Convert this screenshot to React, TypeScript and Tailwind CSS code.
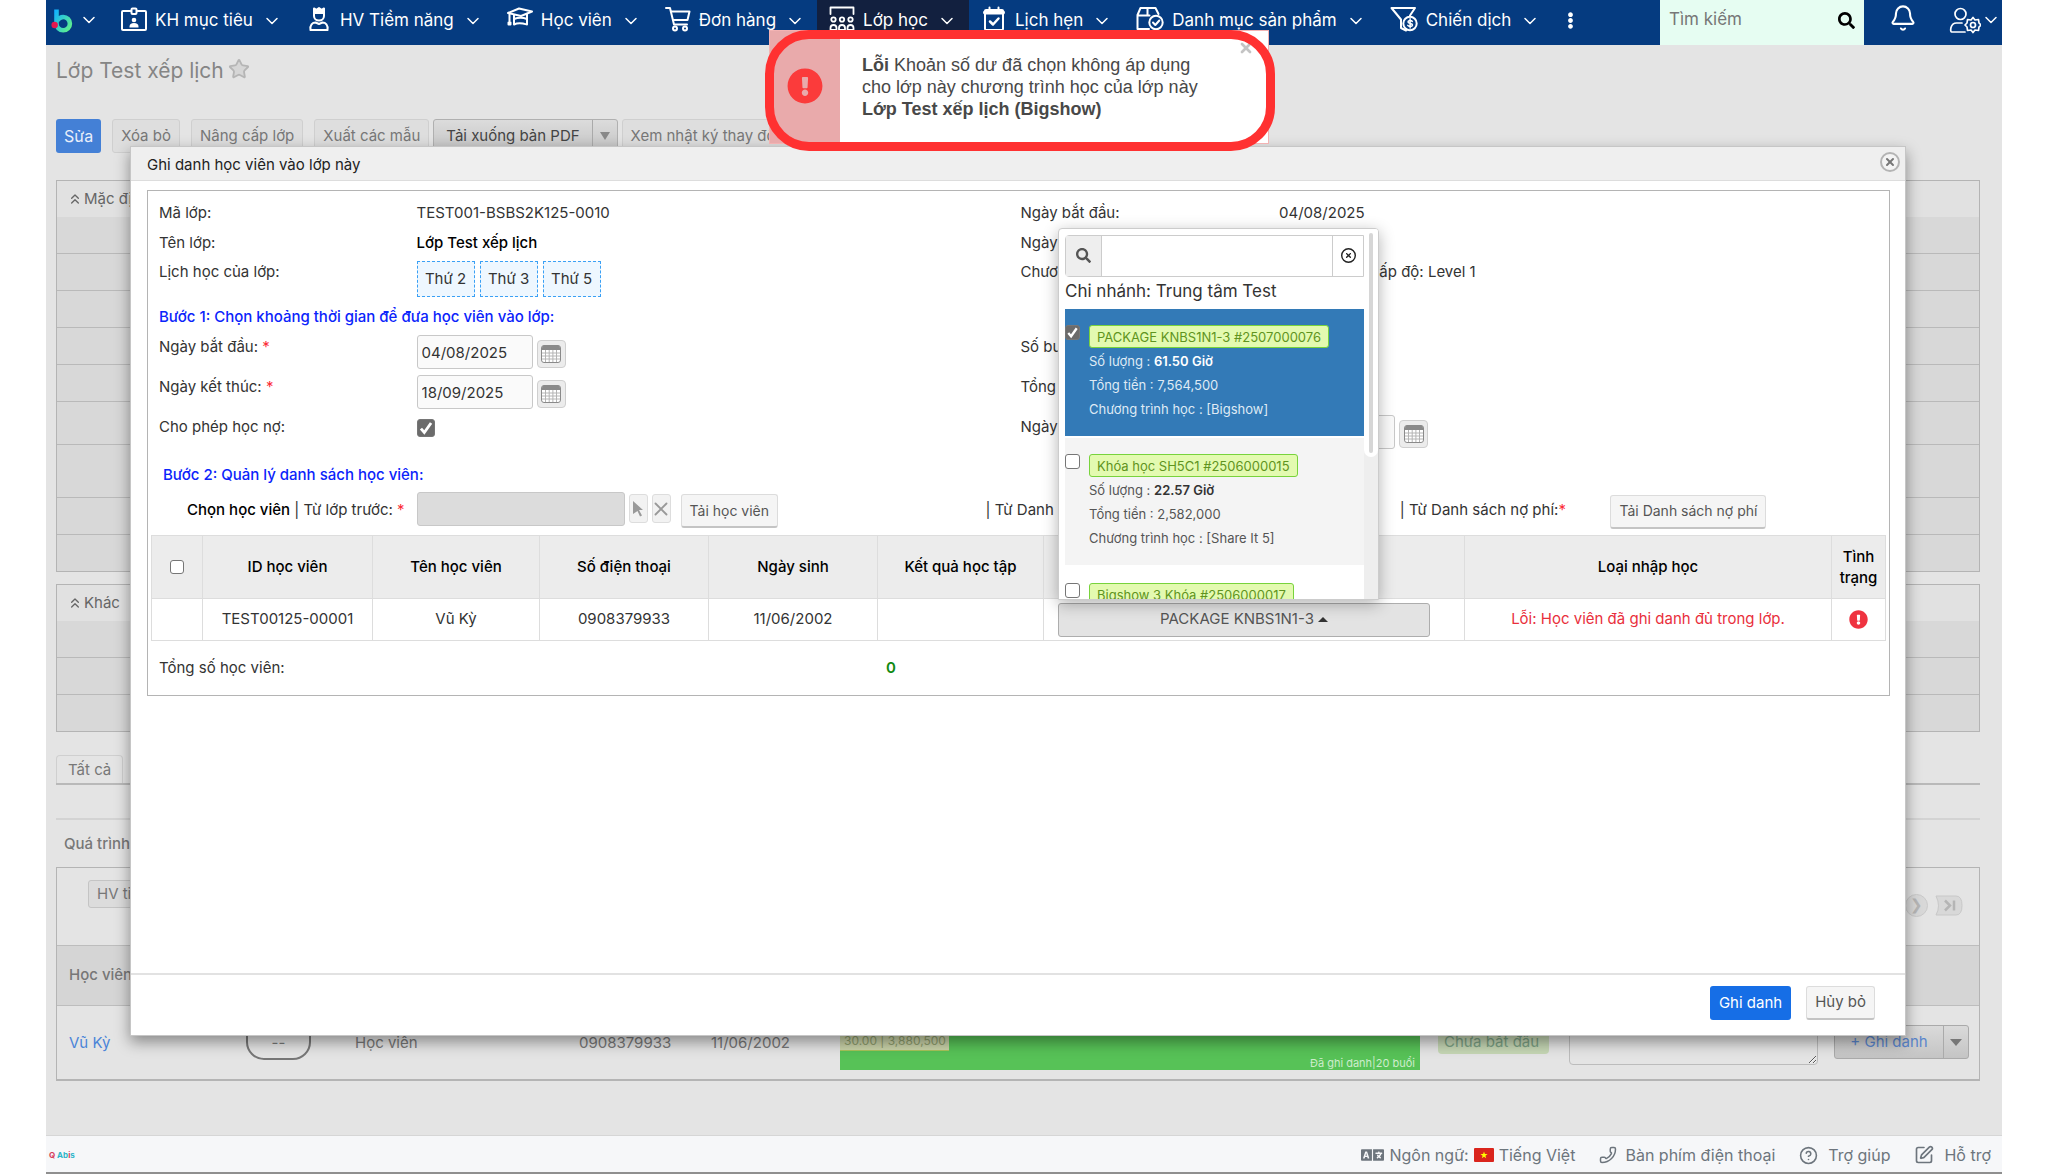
import React, { useState } from "react";
import type { ReactNode } from "react";
import { ChevronDown, ChevronsUp, Bell, CircleHelp, SquarePen, Phone, Star, X } from "lucide-react";
import { FaSearch, FaExclamationCircle, FaEllipsisV, FaLanguage } from "react-icons/fa";
import { FaRegCircleXmark } from "react-icons/fa6";

const navIcon = "h-[26px] w-[26px] shrink-0";
const line = { fill: "none", stroke: "currentColor", strokeWidth: 2, strokeLinecap: "round", strokeLinejoin: "round" } as const;

const BadgeIcon = () => (
  <svg viewBox="0 0 26 26" className={navIcon} {...line}>
    <path d="M9.500 5H2q-1 0-1 1v17q0 1 1 1h22q1 0 1-1V6q0-1-1-1h-7.500" />
    <rect x="10.500" y="2.500" width="5" height="5.500" rx="1" />
    <circle cx="13" cy="14" r="2.300" fill="currentColor" stroke="none" />
    <path d="M8.500 21.500V20.500q0-3.500 4.500-3.500t4.500 3.500v1z" fill="currentColor" stroke="none" />
  </svg>
);
const PersonIcon = () => (
  <svg viewBox="0 0 26 26" className={navIcon} {...line}>
    <path d="M8 7V2.500l2.500 1.300L13 2l2.500 1.800L18 2.500V7z" fill="currentColor" />
    <path d="M8 7v3a5 4.500 0 0 0 10 0V7" />
    <path d="M4.500 24c-.8-5 2-7.500 5-7.500l3.500 1.500 3.500-1.500c3 0 5.800 2.500 5 7.500z" />
  </svg>
);
const CapIcon = () => (
  <svg viewBox="0 0 26 26" className={navIcon} {...line}>
    <path d="M1 7 12 2.500 25 5.500 14 10z" />
    <path d="M7 9v9.500c5-2.500 9.500-1 13 0V8" />
    <path d="M7 13c4-1.500 9-1.500 13 0" />
    <path d="M2.500 7.500v9M1.500 16.500v2h2v-2z" />
  </svg>
);
const CartIcon = () => (
  <svg viewBox="0 0 26 26" className={navIcon} {...line}>
    <path d="M1 2h4l4 16.500h13" />
    <path d="M6 5.500h18.500L22.500 14H8" />
    <circle cx="10" cy="22.500" r="2" />
    <circle cx="20" cy="22.500" r="2" />
  </svg>
);
const ClassIcon = () => (
  <svg viewBox="0 0 26 26" className={navIcon} {...line} strokeWidth={1.8}>
    <path d="M1.500 8V1.500h23V8" />
    {[4.5, 13, 21.5].map((x) => (
      <g key={x}>
        <circle cx={x} cy="13.500" r="2.200" />
        <path d={`M${x - 3} 24v-2a3 3 0 0 1 6 0v2z`} />
      </g>
    ))}
  </svg>
);
const CalendarIcon = () => (
  <svg viewBox="0 0 26 26" className={navIcon} {...line}>
    <rect x="4" y="4" width="18" height="20" rx="1" />
    <path d="M4 6.500h18" strokeWidth="4" />
    <path d="M8.500 1.500v4M17.500 1.500v4" />
    <path d="m9 15.500 3 3 5.500-6" strokeWidth="2.500" />
  </svg>
);
const CatalogIcon = () => (
  <svg viewBox="0 0 28 26" className="h-[26px] w-7 shrink-0" {...line}>
    <path d="M13 23H1.500V9l3-7h15l3 6M1.500 9.500h12M11.500 2v7" />
    <circle cx="20" cy="16.500" r="6.700" />
    <path d="m17 16.500 2.300 2.500 4-4.500" />
  </svg>
);
const FunnelIcon = () => (
  <svg viewBox="0 0 28 26" className="h-[26px] w-7 shrink-0" {...line}>
    <path d="M1.500 2h23.500l-5 7.500M1.500 2 11 13.500V22l5 2.500" />
    <circle cx="20" cy="17.500" r="6.700" />
    <path d="M22.300 15.500c-1-1.500-4.300-1.200-4.300.5 0 2 4.500 1 4.500 3 0 1.800-3.700 2-4.700.4M20.100 12.800v9.200" strokeWidth="1.500" />
  </svg>
);
const UserGearIcon = () => (
  <svg viewBox="0 0 32 28" className="h-7 w-8 shrink-0" {...line} strokeWidth={1.7}>
    <circle cx="11.500" cy="8" r="5.500" />
    <path d="M16 26H2.500c-1.500 0-1.500-9 5-9H13" />
    <circle cx="24" cy="19" r="2.500" />
    <path d="m24 11.500 2 2.500 3.500-.5.500 3.500 2 2-2 2-.5 3.500-3.500-.5-2 2.500-2-2.500-3.500.5-.5-3.500-2-2 2-2 .5-3.500 3.500.5z" />
  </svg>
);

const NavItem = ({ icon, label, active }: { icon: ReactNode; label: string; active?: boolean }) => (
  <button
    type="button"
    className={`flex h-[45px] shrink-0 items-center whitespace-nowrap px-3 pb-1 text-[17px] text-white ${active ? "bg-[#12203f]" : ""}`}
  >
    <span className="pb-1">{icon}</span>
    <span className="ml-2">{label}</span>
    <ChevronDown className="ml-[9px] h-5 w-5" strokeWidth={1.8} />
  </button>
);

const btn = "rounded-[3px] border border-b-2 border-[#dcdcdc] border-b-[#c4c4c4] bg-[#f5f5f5] text-[#555]";
const dimBtn = "h-[34px] shrink-0 whitespace-nowrap rounded-[3px] border border-[#cfcfcf] bg-[#dedede] px-2 text-[#777]";

const CalendarButton = ({ label }: { label: string }) => (
  <button type="button" aria-label={label} className="mt-[5px] flex h-[28px] w-[29px] items-center justify-center rounded border border-[#cfcfcf] bg-[#ececec]">
    <svg viewBox="0 0 20 18" className="h-[18px] w-5">
      <rect x="0.500" y="0.500" width="19" height="17" rx="2.500" fill="#fff" stroke="#8a8a8a" />
      <path d="M1 2.500q0-2 2-2h14q2 0 2 2V5H1z" fill="#8a8a8a" />
      <path d="M1 8h18M1 11h18M1 14h18M4.500 5v12M8.200 5v12M11.900 5v12M15.500 5v12" stroke="#b4b4b4" />
    </svg>
  </button>
);

const TextBox = ({ label, value }: { label: string; value: string }) => {
  const [text, setText] = useState(value);
  return (
    <input
      aria-label={label}
      value={text}
      onChange={(e) => setText(e.target.value)}
      className="h-[34px] w-[116px] rounded-[3px] border border-[#c8c8c8] bg-[#fafafa] px-1 text-[#333]"
    />
  );
};

const Tick = ({ label, checked, className }: { label: string; checked?: boolean; className: string }) => (
  <span className={`relative inline-flex shrink-0 ${className}`}>
    <input
      type="checkbox"
      aria-label={label}
      defaultChecked={checked}
      className="peer h-full w-full appearance-none rounded-[3px] border border-[#767676] bg-white checked:bg-[#6b6b6b]"
    />
    <svg viewBox="0 0 16 16" className="pointer-events-none absolute inset-0 hidden h-full w-full text-white peer-checked:block" fill="none" stroke="currentColor" strokeWidth="2.500">
      <path d="m3.500 8.500 3 3.500 6-8.500" />
    </svg>
  </span>
);

const InfoRow = ({ height, label, required, children, rightLabel, right }: { height: string; label: string; required?: boolean; children: ReactNode; rightLabel?: string; right?: ReactNode }) => (
  <div className={`grid grid-cols-[258fr_605fr_259fr_600fr] leading-[28px] ${height}`}>
    <span>
      {label} {required && <span className="text-red-500">*</span>}
    </span>
    <div className="flex">{children}</div>
    <span className="whitespace-nowrap">{rightLabel}</span>
    <div className="flex whitespace-nowrap">{right}</div>
  </div>
);

type Pack = { name: string; qty: string; total: string; program: string; selected?: boolean };
const packs: Pack[] = [
  { name: "PACKAGE KNBS1N1-3 #2507000076", qty: "61.50 Giờ", total: "7,564,500", program: "[Bigshow]", selected: true },
  { name: "Khóa học SH5C1 #2506000015", qty: "22.57 Giờ", total: "2,582,000", program: "[Share It 5]" },
  { name: "Bigshow 3 Khóa #2506000017", qty: "30.00 Giờ", total: "3,880,500", program: "[Bigshow]" },
];

const PackMenu = () => (
  <div className="absolute bottom-[37px] left-0 z-10 flex h-[372px] w-[321px] overflow-hidden rounded-t border border-[#ccc] bg-white text-left shadow-[0_4px_16px_rgba(0,0,0,0.3)]">
    <div className="w-[305px] shrink-0 pl-[6px] pt-[6px]">
      <div className="flex h-[42px] rounded-l border border-[#ccc]">
        <span className="flex w-9 shrink-0 items-center justify-center border-r border-[#ccc] bg-[#eee]">
          <FaSearch className="h-[15px] w-[15px] text-[#555]" />
        </span>
        <input aria-label="Tìm gói" className="min-w-0 flex-1 px-2 outline-none" />
        <button type="button" aria-label="Xóa tìm kiếm" className="flex w-[31px] shrink-0 items-center justify-center border-l border-[#ccc]">
          <FaRegCircleXmark className="h-[15px] w-[15px] text-[#222]" />
        </button>
      </div>
      <p className="h-8 text-[17px] leading-[28px] text-[#333]">Chi nhánh: Trung tâm Test</p>
      <div className="flex flex-col gap-[2px]">
        {packs.map((p, i) => (
          <div key={p.name} className={`flex h-[127px] shrink-0 pt-4 text-[13px] leading-[24px] ${p.selected ? "bg-[#337ab7] text-[#dfeaf5]" : i === 1 ? "bg-[#f4f4f4] text-[#555]" : "bg-white text-[#555]"}`}>
            <Tick label={p.name} checked={p.selected} className="h-[15px] w-[15px]" />
            <div className="ml-[9px] whitespace-nowrap">
              <span className="inline-block h-[23px] rounded-[3px] border border-[#78d33c] bg-[#e3fab0] px-[7px] leading-[22px] text-[#5f9420]">{p.name}</span>
              <p>
                Số lượng : <b className={`font-semibold ${p.selected ? "text-white" : "text-[#333]"}`}>{p.qty}</b>
              </p>
              <p>Tổng tiền : {p.total}</p>
              <p>Chương trình học : {p.program}</p>
            </div>
          </div>
        ))}
      </div>
    </div>
    <div className="flex-1 bg-[#eee]">
      <div className="h-[228px] rounded-b-full bg-white px-[5px] py-1">
        <div className="h-full rounded-full bg-[#d6d6d6]" />
      </div>
    </div>
  </div>
);

const DimPanel = ({ title, rows }: { title: string; rows: string[] }) => (
  <section className="border border-[#b4b4b4] bg-[#d8d8d8]">
    <h2 className="flex h-[36px] items-center gap-px bg-[#e1e1e1] pl-[10px] text-[#666]">
      <ChevronsUp className="h-4 w-4" />
      {title}
    </h2>
    {rows.map((h, i) => (
      <div key={i} className={`${h} ${i > 0 ? "border-t border-[#b9b9b9]" : ""}`} />
    ))}
  </section>
);

const Header = () => (
  <header className="flex h-[45px] shrink-0 items-start bg-[#053b80] text-white">
    <button type="button" aria-label="Trang chủ" className="mr-[10px] flex h-[39px] items-center gap-[6px] pl-[5px]">
      <svg viewBox="0 0 24 28" className="h-[27px] w-[22px]">
        <defs>
          <linearGradient id="logo" x1="0" y1="0" x2="1" y2="1">
            <stop offset="0" stopColor="#12b4ff" />
            <stop offset="1" stopColor="#60f08a" />
          </linearGradient>
        </defs>
        <path d="M6 3v15.500a7.300 7.300 0 1 0 7.300-7.300q-4 0-6.500 4" fill="none" stroke="url(#logo)" strokeWidth="5" />
        <circle cx="4" cy="20" r="3.500" fill="#e6174f" />
      </svg>
      <ChevronDown className="h-5 w-5" strokeWidth={1.8} />
    </button>
    <nav className="flex">
      <NavItem icon={<BadgeIcon />} label="KH mục tiêu" />
      <NavItem icon={<PersonIcon />} label="HV Tiềm năng" />
      <NavItem icon={<CapIcon />} label="Học viên" />
      <NavItem icon={<CartIcon />} label="Đơn hàng" />
      <NavItem icon={<ClassIcon />} label="Lớp học" active />
      <NavItem icon={<CalendarIcon />} label="Lịch hẹn" />
      <NavItem icon={<CatalogIcon />} label="Danh mục sản phẩm" />
      <NavItem icon={<FunnelIcon />} label="Chiến dịch" />
      <button type="button" aria-label="Thêm" className="flex h-[41px] items-center px-[10px]">
        <FaEllipsisV className="h-[17px] w-[17px]" />
      </button>
    </nav>
    <div className="ml-auto flex h-[45px] w-[204px] shrink-0 items-center bg-[#e6fdf2] px-[9px] pb-[5px]">
      <input aria-label="Tìm kiếm" placeholder="Tìm kiếm" className="min-w-0 flex-1 text-[17px] outline-none placeholder:text-[#777]" />
      <FaSearch className="h-[17px] w-[17px] text-black" />
    </div>
    <button type="button" aria-label="Thông báo" className="ml-[25px] mt-1">
      <Bell className="h-7 w-7" strokeWidth={1.8} />
    </button>
    <button type="button" aria-label="Tài khoản" className="ml-[32px] mr-px mt-1.5 flex items-center">
      <UserGearIcon />
      <ChevronDown className="h-5 w-5" strokeWidth={1.8} />
    </button>
  </header>
);

const Backdrop = () => (
  <main className="flex-1 pl-[10px] pr-[22px] text-[15px] text-[#777]">
    <h1 className="flex h-[52px] items-center gap-1 text-[21px] text-[#858585]">
      Lớp Test xếp lịch <Star className="mb-1 h-[22px] w-[22px] fill-[#d6d6d6] text-[#b5b5b5]" />
    </h1>
    <div className="mt-[22px] flex gap-[11px]">
      <button type="button" className="h-[34px] shrink-0 rounded-[3px] bg-[#4480d6] px-2 text-base text-[#e8eefa]">Sửa</button>
      <button type="button" className={dimBtn}>Xóa bỏ</button>
      <button type="button" className={dimBtn}>Nâng cấp lớp</button>
      <button type="button" className={dimBtn}>Xuất các mẫu</button>
      <div className="-ml-[7px] flex h-[34px] shrink-0 rounded-[3px] border border-[#b0b0b0] bg-gradient-to-b from-[#dcdcdc] to-[#c4c4c4] text-[#444]">
        <button type="button" className="px-3">Tải xuống bản PDF</button>
        <button type="button" aria-label="Thêm lựa chọn" className="flex items-center border-l border-[#aaa] px-[7px]">
          <span className="border-x-[5px] border-t-[8px] border-x-transparent border-t-[#888]" />
        </button>
      </div>
      <button type="button" className={`-ml-[7px] ${dimBtn}`}>Xem nhật ký thay đổi</button>
    </div>
    <div className="mt-[27px] flex flex-col gap-3">
      <DimPanel title="Mặc định" rows={["h-9", "h-[37px]", "h-[37px]", "h-[37px]", "h-[37px]", "h-[43px]", "h-[53px]", "h-[37px]", "h-[37px]"]} />
      <DimPanel title="Khác" rows={["h-9", "h-[37px]", "h-[37px]"]} />
    </div>
    <div className="mt-[23px] border-b-2 border-[#b9b9b9]">
      <button type="button" className="h-[28px] rounded-t border border-b-0 border-[#cfcfcf] px-[11px] pt-0.5">Tất cả</button>
    </div>
    <h2 className="mt-[33px] h-[49px] border-t-2 border-[#d3d3d3] pl-2 pt-[13px] font-medium">Quá trình học tập</h2>
    <section className="border border-b-2 border-[#b4b4b4]">
      <div className="flex h-[77px] items-start justify-between pl-[31px] pr-4 pt-3">
        <button type="button" className="h-[28px] rounded-[3px] border border-[#c4c4c4] bg-[#dcdcdc] px-2">HV tiềm năng</button>
        <div className="mt-[14px] flex gap-[7px] text-[#b5b5b5]">
          <span className="flex h-[23px] w-[23px] items-center justify-center rounded-full border border-[#cacaca] bg-[#d8d8d8]">❯</span>
          <svg viewBox="0 0 28 20" className="h-[23px] w-[28px]" fill="#d8d8d8" stroke="#c8c8c8">
            <path d="M1 .500h20q6 0 6 9.500t-6 9.500H1q5-9 0-19z" />
            <path d="m10 5 5 5-5 5m9-10v10" fill="none" stroke="#b5b5b5" strokeWidth="2.500" />
          </svg>
        </div>
      </div>
      <div className="flex h-[61px] items-center border-y border-[#bdbdbd] bg-[#d5d5d5] pl-3 font-medium">Học viên</div>
      <div className="grid h-[73px] grid-cols-[177px_109px_224px_132px_129px_598px_131px_265px_auto] pl-3 leading-[73px]">
        <a href="#hoc-vien" className="text-[#4b84d8]">Vũ Kỳ</a>
        <span className="mt-2 h-[46px] w-[65px] rounded-[18px] border-2 border-[#777] text-center leading-[54px]">--</span>
        <span>Học viên</span>
        <span>0908379933</span>
        <span>11/06/2002</span>
        <div className="flex h-[64px] w-[580px] flex-col justify-between bg-[#57c257] text-[12px] leading-[18px]">
          <span className="mt-[26px] w-[109px] whitespace-nowrap border-b border-[#a8c45a] bg-[#c9d2a8] pl-1 text-[#8d9c6c]">30.00 | 3,880,500</span>
          <span className="pr-[5px] text-right text-[11px] leading-[14px] text-[#cdeccd]">Đã ghi danh|20 buổi</span>
        </div>
        <span className="mt-6 h-[24px] w-[111px] whitespace-nowrap rounded bg-[#c5d6b4] pl-[6px] leading-[24px] text-[#7aa083]">Chưa bắt đầu</span>
        <textarea aria-label="Ghi chú" className="mt-[13px] h-[46px] w-[249px] rounded-[4px] border border-[#bcbcbc]" />
        <div className="mt-[19px] flex h-[34px] w-[135px] rounded-[3px] border border-[#aaa] bg-gradient-to-b from-[#dadada] to-[#c4c4c4] leading-[30px]">
          <button type="button" className="flex-1 whitespace-nowrap text-[#5b86cc]">+ Ghi danh</button>
          <button type="button" aria-label="Thêm lựa chọn" className="flex items-center border-l border-[#aaa] px-[6px]">
            <span className="border-x-[6px] border-t-[7px] border-x-transparent border-t-[#777]" />
          </button>
        </div>
      </div>
    </section>
  </main>
);

const heads = ["ID học viên", "Tên học viên", "Số điện thoại", "Ngày sinh", "Kết quả học tập", "Gói học", "Loại nhập học"];
const cols = ["w-[51px]", "w-[170px]", "w-[167px]", "w-[169px]", "w-[169px]", "w-[166px]", "w-[421px]", "w-auto", "w-[54px]"];

const EnrollDialog = () => (
  <div role="dialog" aria-labelledby="dialog-title" className="absolute left-[84px] right-[96px] top-[146px] border border-[#c6c6c6] bg-white text-[15px] text-[#333] shadow-[0_6px_14px_rgba(0,0,0,0.4)]">
    <div className="flex h-[34px] items-center justify-between border-b border-[#ddd] bg-[#efefef] pl-4 pr-[5px]">
      <h2 id="dialog-title" className="pt-1 text-[#222]">Ghi danh học viên vào lớp này</h2>
      <button type="button" aria-label="Đóng" className="mb-1 flex h-5 w-5 items-center justify-center rounded-full border-2 border-[#b4b4b4] bg-[#f4f4f4]">
        <X className="h-3 w-3 text-[#777]" strokeWidth={4} />
      </button>
    </div>
    <div className="ml-4 mr-[15px] mt-[9px] border border-[#b4b4b4] pb-4 pt-2">
      <div className="px-[11px]">
        <InfoRow height="h-[30px]" label="Mã lớp:" rightLabel="Ngày bắt đầu:" right="04/08/2025">TEST001-BSBS2K125-0010</InfoRow>
        <InfoRow height="h-[29px]" label="Tên lớp:" rightLabel="Ngày kết thúc:" right="18/09/2025">
          <span className="font-medium text-black">Lớp Test xếp lịch</span>
        </InfoRow>
        <InfoRow height="h-[43px]" label="Lịch học của lớp:" rightLabel="Chương trình học:" right="Bigshow 1K, Cấp độ: Level 1">
          <div className="mt-[3px] flex gap-[5px]">
            {["Thứ 2", "Thứ 3", "Thứ 5"].map((d) => (
              <span key={d} className="flex h-[36px] w-[58px] items-center justify-center border border-dashed border-[#3aa0f5] bg-[#eef7ff]">{d}</span>
            ))}
          </div>
        </InfoRow>
        <h3 className="h-8 font-medium leading-[32px] text-[#0b24fb]">Bước 1: Chọn khoảng thời gian để đưa học viên vào lớp:</h3>
        <InfoRow height="h-10" label="Ngày bắt đầu:" required rightLabel="Số buổi:" right="20">
          <div className="mt-0.5 flex gap-1">
            <TextBox label="Ngày bắt đầu" value="04/08/2025" />
            <CalendarButton label="Chọn ngày bắt đầu" />
          </div>
        </InfoRow>
        <InfoRow height="h-10" label="Ngày kết thúc:" required rightLabel="Tổng số giờ:" right="30.00">
          <div className="mt-0.5 flex gap-1">
            <TextBox label="Ngày kết thúc" value="18/09/2025" />
            <CalendarButton label="Chọn ngày kết thúc" />
          </div>
        </InfoRow>
        <InfoRow
          height="h-10"
          label="Cho phép học nợ:"
          rightLabel="Ngày ghi danh:"
          right={
            <div className="mt-0.5 flex gap-1">
              <TextBox label="Ngày ghi danh" value="04/08/2025" />
              <CalendarButton label="Chọn ngày ghi danh" />
            </div>
          }
        >
          <Tick label="Cho phép học nợ" checked className="mt-[6px] h-[18px] w-[18px]" />
        </InfoRow>
        <h3 className="h-[38px] pl-1 font-medium leading-[44px] text-[#0b24fb]">Bước 2: Quản lý danh sách học viên:</h3>
        <div className="grid h-[44px] grid-cols-[258fr_570fr_415fr_211fr_268fr] whitespace-nowrap leading-[38px]">
          <span className="pl-7">
            <span className="font-medium text-black">Chọn học viên</span> | Từ lớp trước: <span className="text-red-500">*</span>
          </span>
          <div className="flex pt-px">
            <input aria-label="Từ lớp trước" className="h-[34px] w-[208px] rounded-[3px] border border-[#c8c8c8] bg-[#dcdcdc]" />
            <button type="button" aria-label="Chọn lớp" className="ml-1 mt-0.5 flex h-[29px] w-[19px] items-center justify-center rounded-[3px] border border-[#ddd] bg-[#f2f2f2]">
              <svg viewBox="0 0 12 16" className="h-4 w-3" fill="#999"><path d="m1 0 10 9H7l3 5.500-2 1L5.500 10 1 13z" /></svg>
            </button>
            <button type="button" aria-label="Xóa lớp" className="ml-1 mt-0.5 flex h-[29px] w-[19px] items-center justify-center rounded-[3px] border border-[#ddd] bg-[#f2f2f2]">
              <X className="h-[22px] w-[22px] shrink-0 text-[#999]" />
            </button>
            <button type="button" className={`ml-[10px] mt-0.5 h-[34px] px-2 text-sm leading-[30px] ${btn}`}>Tải học viên</button>
          </div>
          <span>| Từ Danh sách bảo lưu:</span>
          <span>| Từ Danh sách nợ phí:<span className="text-red-500">*</span></span>
          <div className="pt-px">
            <button type="button" className={`h-[34px] px-2 text-sm leading-[30px] ${btn}`}>Tải Danh sách nợ phí</button>
          </div>
        </div>
      </div>
      <div className="px-[3px]">
        <table className="w-full table-fixed border-collapse text-center">
          <colgroup>{cols.map((c, i) => <col key={i} className={c} />)}</colgroup>
          <thead>
            <tr className="h-[63px] bg-[#ececec] text-black">
              <th className="border border-[#ddd] pt-1">
                <Tick label="Chọn tất cả" className="h-[14px] w-[14px]" />
              </th>
              {heads.map((h) => <th key={h} className="border border-[#ddd] font-medium">{h}</th>)}
              <th className="border border-[#ddd] font-medium leading-[21px]">Tình trạng</th>
            </tr>
          </thead>
          <tbody>
            <tr className="h-[42px]">
              <td className="border border-[#ddd]" />
              <td className="border border-[#ddd]">TEST00125-00001</td>
              <td className="border border-[#ddd]">Vũ Kỳ</td>
              <td className="border border-[#ddd]">0908379933</td>
              <td className="border border-[#ddd]">11/06/2002</td>
              <td className="border border-[#ddd]" />
              <td className="border border-[#ddd] pl-[14px]">
                <div className="relative w-[372px]">
                  <button type="button" aria-expanded="true" className="flex h-[34px] w-full items-center justify-center gap-1 rounded-[3px] border border-[#adadad] bg-[#e3e3e3] text-[15px] text-[#555]">
                    PACKAGE KNBS1N1-3
                    <span className="border-x-[5px] border-b-[5px] border-x-transparent border-b-[#333]" />
                  </button>
                  <PackMenu />
                </div>
              </td>
              <td className="border border-[#ddd] text-[#e92f3c]">Lỗi: Học viên đã ghi danh đủ trong lớp.</td>
              <td className="border border-[#ddd]">
                <FaExclamationCircle className="mx-auto h-[19px] w-[19px] text-[#ef3340]" />
              </td>
            </tr>
          </tbody>
        </table>
      </div>
      <div className="flex h-[38px] items-end pl-[11px]">
        <span className="w-[727px]">Tổng số học viên:</span>
        <span className="font-semibold text-[#128a12]">0</span>
      </div>
    </div>
    <div className="mt-[277px] flex h-[62px] items-start justify-end gap-[15px] border-t-2 border-[#e2e2e2] pr-[30px] pt-[11px]">
      <button type="button" className="h-[34px] rounded-[3px] bg-[#166ee6] px-[9px] text-white">Ghi danh</button>
      <button type="button" className={`h-[34px] px-2 ${btn}`}>Hủy bỏ</button>
    </div>
  </div>
);

const Toast = () => (
  <div role="alert" className="absolute left-[719px] top-[30px] h-[121px] w-[510px]">
    <div className="mx-1 flex h-[114px] w-[500px] border border-[#f3b3b3] bg-white text-[18px] leading-[22px] text-[#484848] [font-family:'Liberation_Sans',Arial,sans-serif]">
      <span className="flex w-[70px] shrink-0 items-center justify-center bg-[#e9aaab] pb-0.5">
        <FaExclamationCircle className="h-9 w-9 text-[#fb3b3b]" />
      </span>
      <p className="whitespace-nowrap pl-[22px] pt-[23px]">
        <b>Lỗi</b> Khoản số dư đã chọn không áp dụng
        <br />
        cho lớp này chương trình học của lớp này
        <br />
        <b>Lớp Test xếp lịch (Bigshow)</b>
      </p>
      <button type="button" aria-label="Đóng thông báo" className="absolute right-[21px] top-[10px]">
        <X className="h-4 w-4 text-[#c4c4c4]" strokeWidth={4} />
      </button>
    </div>
    <div className="pointer-events-none absolute inset-0 rounded-[44px] border-[9px] border-[#ff3131]" />
  </div>
);

const Footer = () => (
  <footer className="flex h-[39px] shrink-0 items-center border-b-2 border-t border-b-[#8f8f8f] border-t-[#d6d6d6] bg-[#f6f7f9] pl-[3px] pr-[11px] pt-0.5 text-[#6d757d]">
    <span className="text-[8px] font-bold text-[#2cb5c9]">
      <span className="text-[#d8405c]">Q</span> Ab<span className="text-[#d8405c]">i</span>s
    </span>
    <div className="ml-auto flex items-center gap-6 whitespace-nowrap">
      <button type="button" className="flex items-center gap-[5px]">
        <FaLanguage className="h-6 w-[23px]" />
        Ngôn ngữ:
        <svg viewBox="0 0 20 14" className="h-[14px] w-5">
          <rect width="20" height="14" rx="1" fill="#da251d" />
          <path d="m10 3.500.9 2.600h2.700l-2.200 1.600.8 2.600L10 8.700l-2.200 1.600.8-2.600-2.200-1.600h2.700z" fill="#ff0" />
        </svg>
        Tiếng Việt
      </button>
      <button type="button" className="flex items-center gap-2"><Phone className="h-[18px] w-[18px] -scale-x-100" />Bàn phím điện thoại</button>
      <button type="button" className="flex items-center gap-[10px]"><CircleHelp className="h-[19px] w-[19px]" />Trợ giúp</button>
      <button type="button" className="flex items-center gap-[10px]"><SquarePen className="h-5 w-5" />Hỗ trợ</button>
    </div>
  </footer>
);

export default function App() {
  return (
    <div className="bg-white pl-[46px] pr-[46px] [font-family:Inter,'Liberation_Sans',sans-serif]">
      <div className="relative flex min-h-screen flex-col bg-[#e4e4e4]">
        <Header />
        <Backdrop />
        <Footer />
        <EnrollDialog />
        <Toast />
      </div>
    </div>
  );
}
